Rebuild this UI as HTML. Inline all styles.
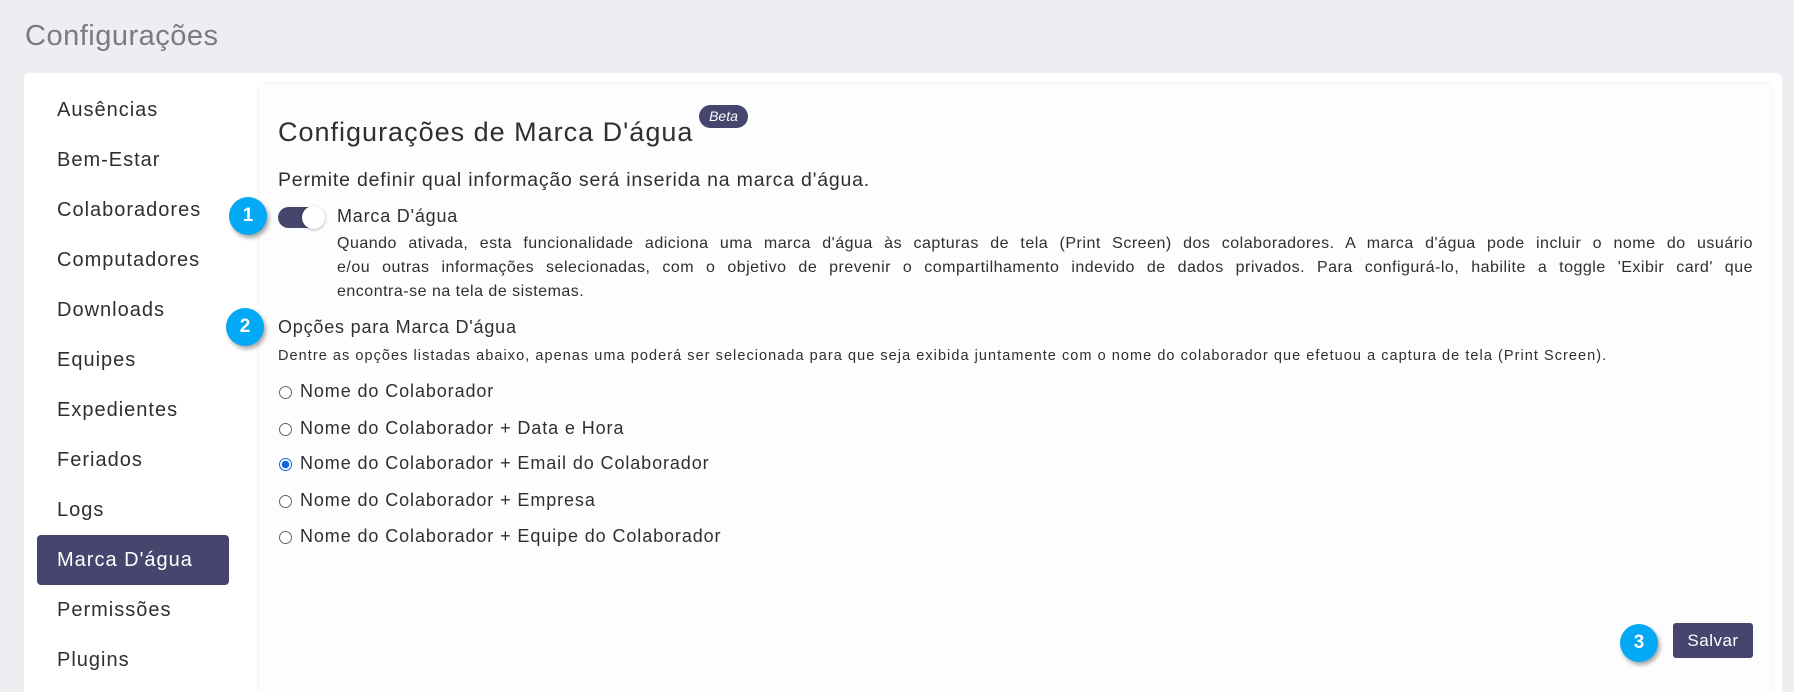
<!DOCTYPE html>
<html><head><meta charset="utf-8"><style>
*{box-sizing:border-box;margin:0;padding:0}
html,body{width:1794px;height:692px;overflow:hidden}
body{background:#eeeef2;font-family:"Liberation Sans",sans-serif;color:#2f2f33;position:relative}
.a{position:absolute;white-space:nowrap}
.title{left:25px;top:20px;font-size:29px;color:#7a7a80;letter-spacing:.5px}
.card{position:absolute;left:24px;top:73px;width:1758px;height:619px;background:#fff;border-radius:6px 6px 0 0}
.side{font-size:20px;color:#2f2f33;left:57px;letter-spacing:1px}
.active{position:absolute;left:37px;top:535px;width:192px;height:50px;background:#45456e;border-radius:4px;color:#fff;font-size:20px;padding:14px 0 0 20px;letter-spacing:1px}
.panel{position:absolute;left:259px;top:84px;width:1512px;height:608px;background:#fdfdfd;box-shadow:0 0 4px rgba(0,0,0,.08)}
.num{position:absolute;width:38px;height:38px;border-radius:50%;background:#03a9f4;color:#fff;font-weight:bold;font-size:19px;text-align:center;line-height:38px;box-shadow:2px 3px 4px rgba(0,0,0,.35)}
.radio{position:absolute;left:279px;width:13px;height:13px;border:1px solid #666;border-radius:50%;background:#fff}
.rt{left:300px;font-size:18px;letter-spacing:.9px}
.pl{position:absolute;left:337px;width:1416px;font-size:16px;letter-spacing:.5px;white-space:nowrap;text-align:justify;text-align-last:justify}
</style></head><body>
<div class="a title">Configurações</div>
<div class="card"></div>
<div class="a side" style="top:99px">Ausências</div>
<div class="a side" style="top:149px">Bem-Estar</div>
<div class="a side" style="top:199px">Colaboradores</div>
<div class="a side" style="top:249px">Computadores</div>
<div class="a side" style="top:299px">Downloads</div>
<div class="a side" style="top:349px">Equipes</div>
<div class="a side" style="top:399px">Expedientes</div>
<div class="a side" style="top:449px">Feriados</div>
<div class="a side" style="top:499px">Logs</div>
<div class="active">Marca D'água</div>
<div class="a side" style="top:599px">Permissões</div>
<div class="a side" style="top:649px">Plugins</div>
<div class="panel"></div>
<div class="a" style="left:278px;top:117px;font-size:27px;letter-spacing:1px">Configurações de Marca D'água</div>
<div class="a" style="left:699px;top:105px;width:49px;height:23px;border-radius:12px;background:#45456e;color:#fff;font-size:14px;font-style:italic;text-align:center;line-height:23px">Beta</div>
<div class="a" style="left:278px;top:169px;font-size:19.5px;letter-spacing:.8px">Permite definir qual informação será inserida na marca d'água.</div>
<div class="num" style="left:229px;top:197px">1</div>
<div class="a" style="left:278px;top:207px;width:46px;height:21px;border-radius:11px;background:#45456e"></div>
<div class="a" style="left:302px;top:206px;width:23px;height:23px;border-radius:50%;background:#fff;box-shadow:0 1px 3px rgba(0,0,0,.3)"></div>
<div class="a" style="left:337px;top:206px;font-size:18px;letter-spacing:.8px">Marca D'água</div>
<div class="pl" style="top:235px">Quando ativada, esta funcionalidade adiciona uma marca d'água às capturas de tela (Print Screen) dos colaboradores. A marca d'água pode incluir o nome do usuário</div>
<div class="pl" style="top:259px">e/ou outras informações selecionadas, com o objetivo de prevenir o compartilhamento indevido de dados privados. Para configurá-lo, habilite a toggle 'Exibir card' que</div>
<div class="a" style="left:337px;top:283px;font-size:16px;letter-spacing:.5px">encontra-se na tela de sistemas.</div>
<div class="num" style="left:226px;top:308px">2</div>
<div class="a" style="left:278px;top:317px;font-size:18px;letter-spacing:.8px">Opções para Marca D'água</div>
<div class="a" style="left:278px;top:348px;font-size:14.5px;letter-spacing:1.05px">Dentre as opções listadas abaixo, apenas uma poderá ser selecionada para que seja exibida juntamente com o nome do colaborador que efetuou a captura de tela (Print Screen).</div>
<div class="radio" style="top:386px"></div><div class="a rt" style="top:381px">Nome do Colaborador</div>
<div class="radio" style="top:423px"></div><div class="a rt" style="top:418px">Nome do Colaborador + Data e Hora</div>
<div class="radio" style="top:458px;border-color:#0b6ad8;background:radial-gradient(circle,#0b6ad8 3.5px,#fff 4px)"></div><div class="a rt" style="top:453px">Nome do Colaborador + Email do Colaborador</div>
<div class="radio" style="top:495px"></div><div class="a rt" style="top:490px">Nome do Colaborador + Empresa</div>
<div class="radio" style="top:531px"></div><div class="a rt" style="top:526px">Nome do Colaborador + Equipe do Colaborador</div>
<div class="num" style="left:1620px;top:624px">3</div>
<div class="a" style="left:1673px;top:623px;width:80px;height:35px;background:#45456e;border-radius:3px;color:#fff;font-size:17px;letter-spacing:.5px;text-align:center;line-height:35px">Salvar</div>
</body></html>
